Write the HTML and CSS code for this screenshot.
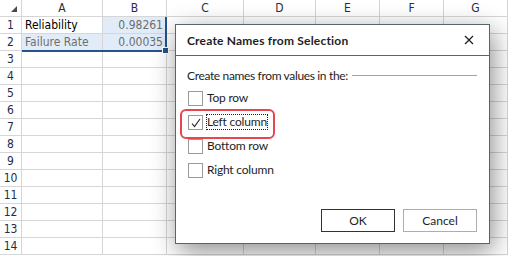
FILE: index.html
```html
<!DOCTYPE html>
<html lang="en">
<head>
  <meta charset="UTF-8">
  <title>Create Names from Selection</title>
  <link rel="stylesheet" href="styles.css">
</head>
<body>
  <div class="page">
    <div class="sheet">
      <div class="corner"><span class="tri"></span></div>
      <div class="hd">A</div><div class="hd">B</div><div class="hd">C</div><div class="hd">D</div><div class="hd">E</div><div class="hd">F</div><div class="hd">G</div>

      <div class="rh">1</div><div class="cell">Reliability</div><div class="cell num in-sel">0.98261</div><div></div><div></div><div></div><div></div><div></div>
      <div class="rh">2</div><div class="cell muted in-sel">Failure Rate</div><div class="cell num in-sel">0.00035</div><div></div><div></div><div></div><div></div><div></div>
      <div class="rh">3</div><div></div><div></div><div></div><div></div><div></div><div></div><div></div>
      <div class="rh">4</div><div></div><div></div><div></div><div></div><div></div><div></div><div></div>
      <div class="rh">5</div><div></div><div></div><div></div><div></div><div></div><div></div><div></div>
      <div class="rh">6</div><div></div><div></div><div></div><div></div><div></div><div></div><div></div>
      <div class="rh">7</div><div></div><div></div><div></div><div></div><div></div><div></div><div></div>
      <div class="rh">8</div><div></div><div></div><div></div><div></div><div></div><div></div><div></div>
      <div class="rh">9</div><div></div><div></div><div></div><div></div><div></div><div></div><div></div>
      <div class="rh">10</div><div></div><div></div><div></div><div></div><div></div><div></div><div></div>
      <div class="rh">11</div><div></div><div></div><div></div><div></div><div></div><div></div><div></div>
      <div class="rh">12</div><div></div><div></div><div></div><div></div><div></div><div></div><div></div>
      <div class="rh">13</div><div></div><div></div><div></div><div></div><div></div><div></div><div></div>
      <div class="rh">14</div><div></div><div></div><div></div><div></div><div></div><div></div><div></div>
    </div>

    <!-- selection frame over A1:B2 -->
    <div class="selection"><span class="handle"></span></div>

    <div class="dialog">
      <div class="dialog-title">
        <span>Create Names from Selection</span>
        <svg class="close" width="10" height="10" viewBox="0 0 10 10">
          <path d="M1 1 L9 9 M9 1 L1 9" stroke="#222" stroke-width="1.3" fill="none"/>
        </svg>
      </div>
      <div class="dialog-body">
        <div class="group-label">
          <span>Create names from values in the:</span>
          <span class="rule"></span>
        </div>
        <div class="options">
          <div class="opt"><span class="box"></span><span class="label">Top row</span></div>
          <div class="opt">
            <span class="box">
              <svg width="13" height="13" viewBox="0 0 13 13">
                <path d="M3 7.5 L5.5 10.5 L11 3" stroke="#222" stroke-width="1.1" fill="none"/>
              </svg>
            </span>
            <span class="label focused">Left column</span>
            <span class="highlight"></span>
          </div>
          <div class="opt"><span class="box"></span><span class="label">Bottom row</span></div>
          <div class="opt"><span class="box"></span><span class="label">Right column</span></div>
        </div>
        <div class="buttons">
          <div class="btn default">OK</div>
          <div class="btn">Cancel</div>
        </div>
      </div>
    </div>
  </div>
</body>
</html>
```

FILE: styles.css
```css
body {
  margin: 0;
  background-color: #fff;
  font-family: "DejaVu Sans Condensed", "DejaVu Sans", sans-serif;
}

.page {
  position: relative;
  width: 508px;
  height: 256px;
  overflow: hidden;
}

.sheet {
  display: grid;
  grid-template-columns: 22px 81px 64px 77px 72px 64px 64px 64px;
  grid-template-rows: 17px repeat(14, 17px);
  font-size: 12px;
}

.sheet > div {
  box-sizing: border-box;
  border-right: 1px solid #d6d6d6;
  border-bottom: 1px solid #d6d6d6;
  line-height: 16px;
  white-space: nowrap;
  overflow: hidden;
}

.corner {
  display: flex;
  align-items: flex-end;
  justify-content: flex-end;
  padding: 0 4px 4px 0;
}

.tri {
  width: 0;
  height: 0;
  border-left: 6px solid transparent;
  border-bottom: 6px solid #4a4a4a;
}

.hd {
  text-align: center;
  color: #2e2e3a;
}

.rh {
  text-align: center;
  color: #1f2d4d;
}

.cell {
  padding: 0 3px;
  color: #000;
}

.num {
  text-align: right;
  color: #6e6e6e;
}

.muted {
  color: #6e6e6e;
}

.in-sel {
  background-color: #e1ecf8;
}

.selection {
  position: absolute;
  left: 22px;
  top: 17px;
  width: 145px;
  height: 35px;
  box-sizing: border-box;
  border-right: 2px solid #24548a;
  border-bottom: 2px solid #24548a;
}

.handle {
  position: absolute;
  right: -4px;
  bottom: -4px;
  width: 5px;
  height: 5px;
  background-color: #24548a;
  border: 1px solid #fff;
}

.dialog {
  position: absolute;
  left: 175px;
  top: 24px;
  width: 315px;
  height: 220px;
  box-sizing: border-box;
  display: flex;
  flex-direction: column;
  background-color: #fff;
  border: 1px solid #56666c;
  box-shadow: 3px 7px 24px rgba(0, 0, 0, 0.45);
  font-family: Lato, "Noto Sans", sans-serif;
  font-size: 12px;
  color: #1e1e1e;
}

.dialog-title {
  height: 31px;
  box-sizing: border-box;
  display: flex;
  align-items: center;
  justify-content: space-between;
  padding: 0 15px 0 11px;
  border-bottom: 1px solid #56666c;
  font-weight: bold;
  letter-spacing: 0.2px;
}

.dialog-body {
  flex: 1;
  display: flex;
  flex-direction: column;
  padding: 11px 12px 11px 11px;
}

.group-label {
  display: flex;
  align-items: center;
  height: 16px;
  letter-spacing: -0.35px;
}

.rule {
  flex: 1;
  margin-left: 4px;
  border-top: 1px solid #a3a3a3;
}

.options {
  margin-top: 3px;
}

.opt {
  position: relative;
  height: 24px;
  display: flex;
  align-items: center;
}

.box {
  width: 15px;
  height: 15px;
  box-sizing: border-box;
  margin-left: 1px;
  border: 1px solid #9a9a9a;
  display: flex;
  align-items: center;
  justify-content: center;
}

.label {
  margin-left: 4px;
  line-height: 14px;
  letter-spacing: -0.2px;
}

.focused {
  outline: 1px dotted #222;
  outline-offset: 0;
}

.highlight {
  position: absolute;
  left: -7px;
  top: -1px;
  width: 95px;
  height: 30px;
  box-sizing: border-box;
  border: 2px solid #e8464c;
  border-radius: 6px;
}

.buttons {
  margin-top: auto;
  display: flex;
  justify-content: flex-end;
  gap: 8px;
}

.btn {
  width: 74px;
  height: 23px;
  box-sizing: border-box;
  display: flex;
  align-items: center;
  justify-content: center;
  border: 1px solid #adadad;
  background-color: #fff;
}

.btn.default {
  border-color: #333;
}
```
